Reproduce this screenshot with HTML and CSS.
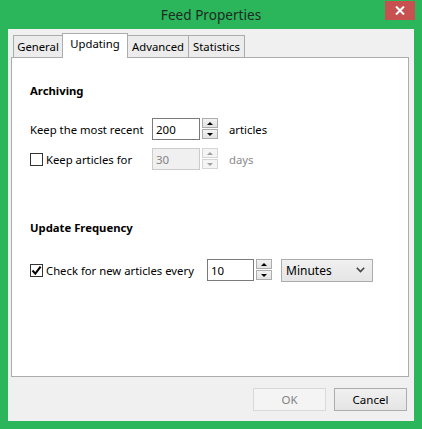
FILE: index.html
```html
<!DOCTYPE html>
<html lang="en">
<head>
    <meta charset="UTF-8">
    <meta name="viewport" content="width=device-width, initial-scale=1.0">
    <title>Feed Properties</title>
    <link rel="stylesheet" href="styles.css">
</head>
<body>
    <div class="window">
        <div class="titlebar">
            <span></span>
            <span class="title">Feed Properties</span>
            <button class="close" aria-label="Close">
                <svg width="10" height="9" viewBox="0 0 10 9">
                    <path d="M1 0.5 L9 8.5 M9 0.5 L1 8.5" stroke="#fff" stroke-width="2"/>
                </svg>
            </button>
        </div>

        <div class="client">
            <div class="tabs">
                <div class="tab tab-general">General</div>
                <div class="tab tab-updating active">Updating</div>
                <div class="tab tab-advanced">Advanced</div>
                <div class="tab tab-statistics">Statistics</div>
            </div>

            <div class="panel">
                <h3 class="section">Archiving</h3>

                <div class="row row-first">
                    <span class="label">Keep the most recent</span>
                    <div class="spin-field">
                        <input class="num" type="text" value="200">
                        <div class="spinner">
                            <span class="spin-btn"><i class="arrow up"></i></span>
                            <span class="spin-btn"><i class="arrow down"></i></span>
                        </div>
                    </div>
                    <span class="unit">articles</span>
                </div>

                <div class="row row-second">
                    <span class="label">
                        <span class="check"></span>Keep articles for
                    </span>
                    <div class="spin-field disabled">
                        <input class="num" type="text" value="30" disabled>
                        <div class="spinner">
                            <span class="spin-btn"><i class="arrow up"></i></span>
                            <span class="spin-btn"><i class="arrow down"></i></span>
                        </div>
                    </div>
                    <span class="unit muted">days</span>
                </div>

                <h3 class="section section-update">Update Frequency</h3>

                <div class="row row-update">
                    <span class="label label-wide">
                        <span class="check checked">
                            <svg width="11" height="11" viewBox="0 0 11 11">
                                <path d="M1.5 5.5 L4.3 8.6 L9.6 1.6" fill="none" stroke="#000" stroke-width="2"/>
                            </svg>
                        </span>Check for new articles every
                    </span>
                    <div class="spin-field small">
                        <input class="num" type="text" value="10">
                        <div class="spinner">
                            <span class="spin-btn"><i class="arrow up"></i></span>
                            <span class="spin-btn"><i class="arrow down"></i></span>
                        </div>
                    </div>
                    <div class="select">
                        <span>Minutes</span>
                        <svg width="9" height="6" viewBox="0 0 9 6">
                            <path d="M0.8 0.8 L4.5 4.6 L8.2 0.8" fill="none" stroke="#444" stroke-width="1.6"/>
                        </svg>
                    </div>
                </div>
            </div>

            <div class="actions">
                <button class="btn" disabled>OK</button>
                <button class="btn">Cancel</button>
            </div>
        </div>
    </div>
</body>
</html>
```

FILE: styles.css
```css
* {
    margin: 0;
    padding: 0;
    box-sizing: border-box;
}

body {
    font-family: "Noto Sans", "Open Sans", sans-serif;
    font-size: 11.3px;
    color: #000;
    background: #2bb65b;
}

.window {
    width: 422px;
    height: 429px;
    background: #2bb65b;
    padding: 0 8px 8px 8px;
    display: flex;
    flex-direction: column;
}

/* title bar */
.titlebar {
    height: 29px;
    display: grid;
    grid-template-columns: 1fr auto 1fr;
    align-items: start;
}

.title {
    font-family: "Noto Sans", "Open Sans", sans-serif;
    font-size: 13.6px;
    color: #1e2a22;
    line-height: 30px;
}

.close {
    justify-self: end;
    width: 30px;
    height: 19px;
    margin-top: 1px;
    margin-right: -1px;
    border: none;
    background: #c75050;
    display: flex;
    align-items: center;
    justify-content: center;
}

/* client area */
.client {
    flex: 1;
    background: #f0f0f0;
    display: flex;
    flex-direction: column;
}

.tabs {
    height: 28px;
    display: flex;
    align-items: flex-end;
    padding-left: 5px;
    position: relative;
    z-index: 1;
}

.tab {
    height: 22px;
    border: 1px solid #acacac;
    border-bottom: none;
    background: #ececec;
    line-height: 21px;
    text-align: center;
}

.tab-general { width: 50px; }
.tab-updating { width: 66px; margin-left: -1px; }
.tab-advanced { width: 62px; margin-left: -1px; }
.tab-statistics { width: 57px; margin-left: -1px; }

.tab.active {
    height: 25px;
    background: #fff;
    line-height: 20px;
    margin-bottom: -1px;
    padding-bottom: 2px;
}

.panel {
    height: 320px;
    margin: 0 5px 0 3px;
    background: #fff;
    border: 1px solid #acacac;
    padding: 25px 18px 0 18px;
}

.section {
    font-size: 11.3px;
    font-weight: bold;
    line-height: 16px;
    height: 16px;
}

.section-update {
    margin-top: 50px;
}

.row {
    display: flex;
    align-items: center;
    height: 22px;
}

.row-first { margin-top: 19px; }
.row-second { margin-top: 8px; }
.row-update { margin-top: 23px; }

.label {
    width: 122px;
    display: flex;
    align-items: center;
    white-space: nowrap;
}

.label-wide {
    width: 177px;
}

.check {
    width: 13px;
    height: 13px;
    border: 1px solid #333;
    background: #fff;
    margin-right: 3px;
    display: flex;
    align-items: center;
    justify-content: center;
}

/* spin box */
.spin-field {
    display: flex;
    align-items: flex-start;
    height: 22px;
}

.num {
    width: 48px;
    height: 22px;
    border: 1px solid #7a7a7a;
    font-family: inherit;
    font-size: 11.5px;
    padding: 0 3px;
    background: #fff;
    color: #000;
    outline: none;
}

.spin-field.small .num {
    width: 47px;
}

.spinner {
    margin-left: 2px;
    width: 16px;
    height: 21px;
    display: flex;
    flex-direction: column;
    gap: 1px;
}

.spin-btn {
    flex: 1;
    border: 1px solid #acacac;
    background: linear-gradient(#f2f2f2, #e2e2e2);
    display: flex;
    align-items: center;
    justify-content: center;
}

.arrow {
    width: 0;
    height: 0;
    border-left: 3px solid transparent;
    border-right: 3px solid transparent;
}

.arrow.up { border-bottom: 3px solid #000; }
.arrow.down { border-top: 3px solid #000; }

.spin-field.disabled .num {
    background: #f0f0f0;
    border-color: #cccccc;
    color: #838383;
}

.spin-field.disabled .spin-btn {
    border-color: #d5d5d5;
    background: #f4f4f4;
}

.spin-field.disabled .arrow.up { border-bottom-color: #a0a0a0; }
.spin-field.disabled .arrow.down { border-top-color: #a0a0a0; }

.unit {
    margin-left: 11px;
}

.muted {
    color: #8a8a8a;
}

.select {
    margin-left: 9px;
    width: 92px;
    height: 23px;
    border: 1px solid #acacac;
    background: linear-gradient(#f0f0f0, #e5e5e5);
    display: flex;
    align-items: center;
    justify-content: space-between;
    padding: 0 7px 0 4px;
    font-size: 12px;
}

/* bottom buttons */
.actions {
    display: flex;
    justify-content: flex-end;
    gap: 8px;
    padding: 11px 7px 0 0;
}

.btn {
    width: 73px;
    height: 23px;
    font-family: inherit;
    font-size: 11.5px;
    border: 1px solid #acacac;
    background: linear-gradient(#f0f0f0, #e5e5e5);
    color: #000;
}

.btn:disabled {
    background: #f4f4f4;
    border-color: #d9d9d9;
    color: #838383;
}
```
